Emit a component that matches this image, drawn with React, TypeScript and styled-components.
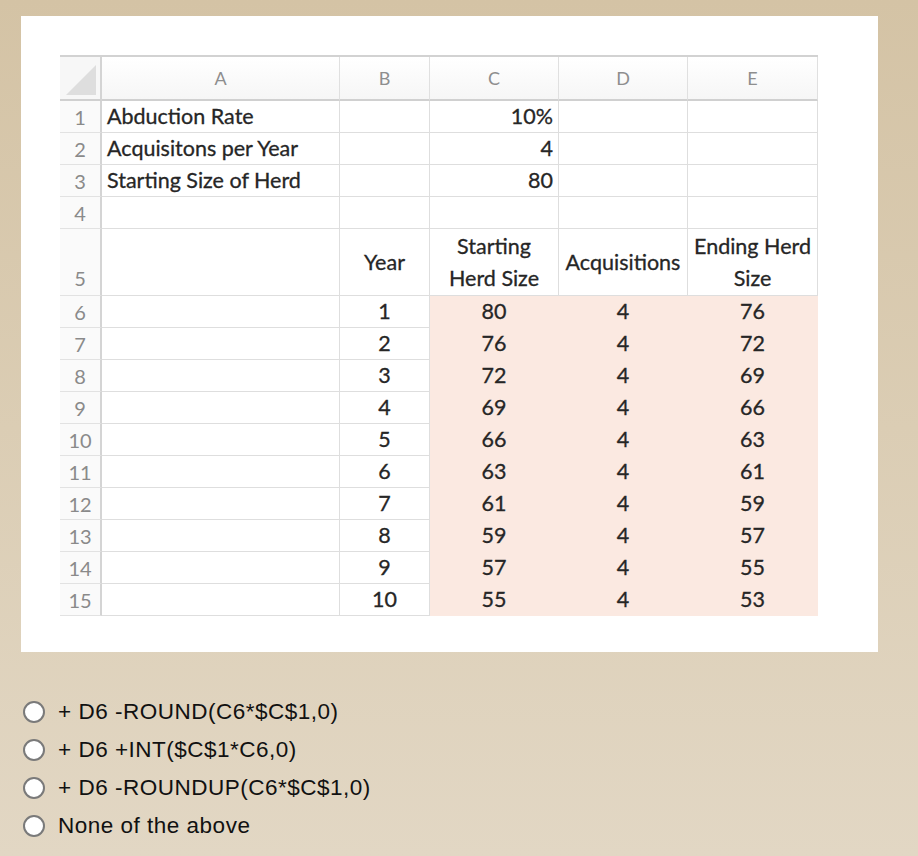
import * as React from "react";
import styled, { createGlobalStyle } from "styled-components";

const GlobalStyle = createGlobalStyle`
  html, body {
    margin: 0;
    padding: 0;
  }
  body {
    min-height: 856px;
    background: linear-gradient(180deg, #d4c3a5 0%, #dbcdb4 50%, #e2d7c4 100%);
    font-family: "Liberation Sans", Arial, sans-serif;
  }
`;

const Page = styled.div`
  padding: 16px 0 0 21px;
  width: 918px;
  box-sizing: border-box;
`;

const Panel = styled.div`
  width: 857px;
  height: 636px;
  background: #ffffff;
  box-sizing: border-box;
  padding: 39px 0 0 39px;
`;

const Sheet = styled.div`
  display: grid;
  grid-template-columns: 42px 238px 90px 129px 129px 130px;
  grid-template-rows: 44px repeat(4, 32px) 67px repeat(10, 32px);
  width: 758px;
  border-top: 2px solid #d2d2d2;
  font-family: Lato, "Open Sans", sans-serif;
  font-size: 21.5px;
  color: #262626;
`;

const Corner = styled.div`
  position: relative;
  background: #f7f7f7;
  border-right: 2px solid #d4d4d4;
  border-bottom: 2px solid #d0d0d0;
  &::after {
    content: "";
    position: absolute;
    right: 4px;
    bottom: 4px;
    width: 0;
    height: 0;
    border-left: 30px solid transparent;
    border-bottom: 30px solid #dedede;
  }
`;

const ColHead = styled.div`
  display: flex;
  align-items: center;
  justify-content: center;
  background: linear-gradient(180deg, #ffffff 0%, #f6f6f6 100%);
  border-right: 1px solid #e0e0e0;
  border-bottom: 2px solid #d0d0d0;
  color: #8e8e8e;
  font-size: 18px;
`;

const RowHead = styled.div<{ $bottom?: boolean }>`
  display: flex;
  align-items: ${(p) => (p.$bottom ? "flex-end" : "center")};
  justify-content: center;
  padding-bottom: ${(p) => (p.$bottom ? "5px" : "0")};
  background: #fafafa;
  border-right: 2px solid #d4d4d4;
  border-bottom: 1px solid #e2e2e2;
  color: #8a8a8a;
  font-size: 20px;
`;

const Cell = styled.div<{ $align?: "left" | "center" | "right"; $fill?: boolean }>`
  display: flex;
  align-items: center;
  justify-content: ${(p) =>
    p.$align === "right" ? "flex-end" : p.$align === "center" ? "center" : "flex-start"};
  padding: 0 5px 1px;
  text-align: center;
  line-height: 32px;
  -webkit-text-stroke: 0.3px #262626;
  background: ${(p) => (p.$fill ? "#fbe9e1" : "#ffffff")};
  border-right: 1px solid ${(p) => (p.$fill ? "#fbe9e1" : "#dedede")};
  border-bottom: 1px solid ${(p) => (p.$fill ? "#fbe9e1" : "#dedede")};
  white-space: nowrap;
`;

const Options = styled.div`
  display: flex;
  flex-direction: column;
  padding: 41px 0 0 2px;
`;

const Option = styled.label`
  display: flex;
  align-items: center;
  height: 38px;
  gap: 13px;
  font-size: 22.5px;
  letter-spacing: 0.5px;
  color: #111111;
`;

const Radio = styled.span`
  display: inline-block;
  flex: none;
  width: 18px;
  height: 18px;
  border-radius: 50%;
  border: 2px solid #7a7a7a;
  background: #ffffff;
`;

const columns = ["A", "B", "C", "D", "E"];

const topRows = [
  { label: "Abduction Rate", value: "10%" },
  { label: "Acquisitons per Year", value: "4" },
  { label: "Starting Size of Herd", value: "80" },
  { label: "", value: "" },
];

const herd = [
  [1, 80, 4, 76],
  [2, 76, 4, 72],
  [3, 72, 4, 69],
  [4, 69, 4, 66],
  [5, 66, 4, 63],
  [6, 63, 4, 61],
  [7, 61, 4, 59],
  [8, 59, 4, 57],
  [9, 57, 4, 55],
  [10, 55, 4, 53],
];

const choices = [
  "+ D6 -ROUND(C6*$C$1,0)",
  "+ D6 +INT($C$1*C6,0)",
  "+ D6 -ROUNDUP(C6*$C$1,0)",
  "None of the above",
];

export default function App() {
  return (
    <>
      <GlobalStyle />
      <Page>
        <Panel>
          <Sheet>
            <Corner />
            {columns.map((c) => (
              <ColHead key={c}>{c}</ColHead>
            ))}

            {topRows.map((r, i) => (
              <React.Fragment key={i}>
                <RowHead>{i + 1}</RowHead>
                <Cell>{r.label}</Cell>
                <Cell />
                <Cell $align="right">{r.value}</Cell>
                <Cell />
                <Cell />
              </React.Fragment>
            ))}

            <RowHead $bottom>5</RowHead>
            <Cell />
            <Cell $align="center">Year</Cell>
            <Cell $align="center">
              Starting
              <br />
              Herd Size
            </Cell>
            <Cell $align="center">Acquisitions</Cell>
            <Cell $align="center">
              Ending Herd
              <br />
              Size
            </Cell>

            {herd.map(([year, start, acq, end], i) => (
              <React.Fragment key={year}>
                <RowHead>{i + 6}</RowHead>
                <Cell />
                <Cell $align="center">{year}</Cell>
                <Cell $align="center" $fill>
                  {start}
                </Cell>
                <Cell $align="center" $fill>
                  {acq}
                </Cell>
                <Cell $align="center" $fill>
                  {end}
                </Cell>
              </React.Fragment>
            ))}
          </Sheet>
        </Panel>

        <Options>
          {choices.map((c) => (
            <Option key={c}>
              <Radio />
              {c}
            </Option>
          ))}
        </Options>
      </Page>
    </>
  );
}
